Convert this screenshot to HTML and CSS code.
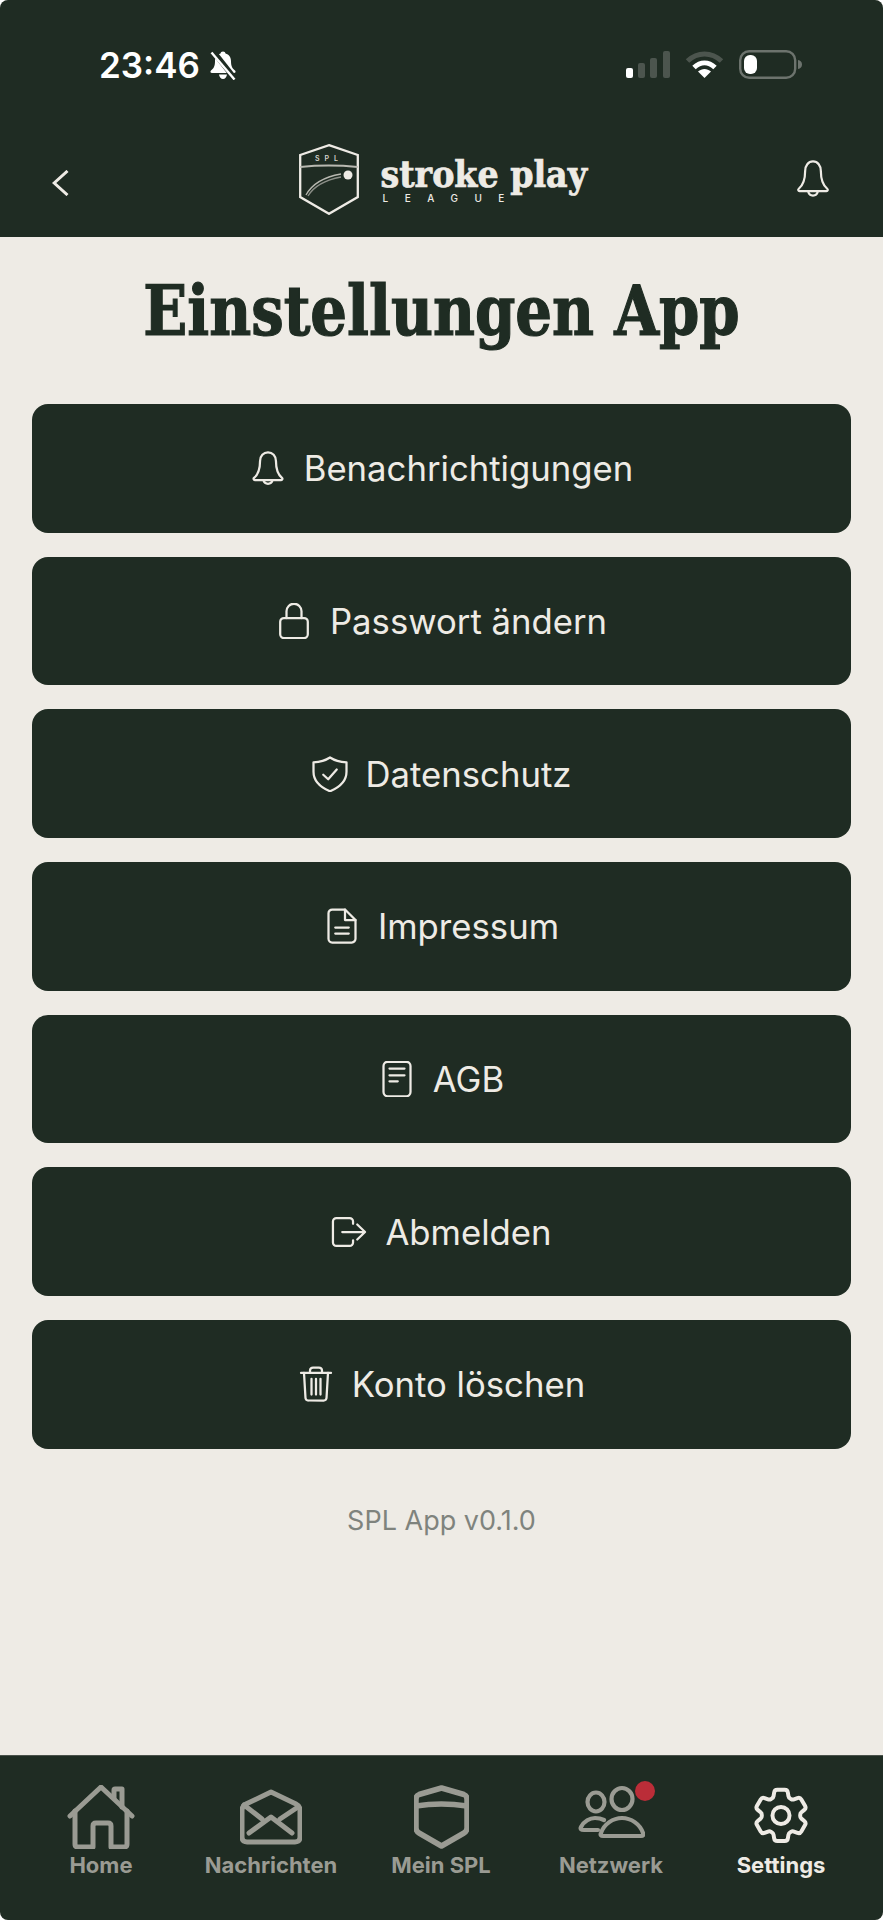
FILE: index.html
```html
<!DOCTYPE html>
<html>
	<head>
		<meta charset="UTF-8">
		<title>Einstellungen App</title>
		<link rel="stylesheet" href="styles.css">
	</head>
	<body>
		<div class="app">
			<header class="top">
				<div class="status">
					<div class="status-left">
						<span class="time">23:46</span>
						<svg class="silent" viewBox="0 0 28 29" width="28" height="29">
							<path fill="#fff" d="M14 .5c-1.500 0-2.300.9-2.500 2.100C8 3.500 6 6.300 6 10.200c0 5.300-1.700 7.300-4 9.300-1.100 1-.5 2.500 1 2.500h22c1.500 0 2.100-1.500 1-2.500-2.300-2-4-4-4-9.300 0-3.900-2-6.700-5.500-7.600C16.300 1.400 15.500.5 14 .5z"/>
							<path fill="#fff" d="M10 23.500h8c-.3 2.500-2 4.500-4 4.500s-3.700-2-4-4.500z"/>
							<path stroke="#1f2c23" stroke-width="5.500" d="M4 0l22 28"/>
							<path stroke="#fff" stroke-width="2.400" d="M2.500 1.500l23 27"/>
						</svg>
					</div>
					<div class="status-right">
						<svg viewBox="0 0 44 27" width="44" height="27">
							<rect x="0" y="17" width="7" height="10" rx="2" fill="#fff"/>
							<rect x="12" y="12" width="7" height="15" rx="2" fill="#4c554e"/>
							<rect x="24" y="7" width="7" height="20" rx="2" fill="#4c554e"/>
							<rect x="37" y="0" width="7" height="27" rx="2" fill="#4c554e"/>
						</svg>
						<svg viewBox="0 0 39 27" width="39" height="27">
							<path fill="none" stroke="#4c554e" stroke-width="5" d="M2.500 10c10-9.500 24-9.500 34 0"/>
							<path fill="none" stroke="#fff" stroke-width="5" d="M9 16.500c6.500-6 14.500-6 21 0"/>
							<path fill="#fff" d="M13 20.500c4-3.500 9-3.500 13 0l-6.500 6.500z"/>
						</svg>
						<svg viewBox="0 0 63 29" width="63" height="29">
							<rect x="1.200" y="1.200" width="55" height="26.600" rx="9" fill="none" stroke="#6c736d" stroke-width="2.400"/>
							<rect x="5" y="5" width="13" height="19" rx="6" fill="#fff"/>
							<path fill="#6c736d" d="M59 10c2.500.5 4 2 4 4.500s-1.500 4-4 4.500z"/>
						</svg>
					</div>
				</div>
				<div class="bar">
					<svg class="back" viewBox="0 0 17 26" width="17" height="26">
						<path fill="none" stroke="#eeebe5" stroke-width="3" d="M15.500 1L2.200 13l13.300 12"/>
					</svg>
					<div class="logo">
						<svg class="logo-mark" viewBox="0 0 60 71" width="60" height="71">
							<path fill="none" stroke="#eeebe5" stroke-width="2.300" d="M30 1.200L58.800 11v42L30 69.800 1.200 53V11z"/>
							<path fill="none" stroke="#b9b9b1" stroke-width="1.800" d="M1.200 23c19-2 38-2 57.600 0"/>
							<text class="logo-spl" x="30" y="17" text-anchor="middle">SPL</text>
							<circle cx="49" cy="31" r="4.500" fill="#eeebe5"/>
							<path fill="none" stroke="#b9b9b1" stroke-width="1.300" d="M7 51c6-11 18-18 35-21"/>
							<path fill="none" stroke="#8c8f88" stroke-width="1.300" d="M9 52c6-10 17-16 33-19"/>
						</svg>
						<div class="logo-text">
							<div class="logo-name">stroke play</div>
							<div class="logo-league">LEAGUE</div>
						</div>
					</div>
					<svg class="bell-top" viewBox="0 0 24 27" width="36" height="40">
						<path fill="none" stroke="#eeebe5" stroke-width="1.500" stroke-linejoin="round" d="M12 1c-3.200 0-5.300 2.800-5.300 6.400 0 6-1.300 9.500-4.300 12-.7.600-.4 1.600.5 1.600h18.200c.9 0 1.200-1 .5-1.600-3-2.500-4.300-6-4.300-12C17.300 3.800 15.200 1 12 1z"/>
						<path fill="none" stroke="#eeebe5" stroke-width="1.500" d="M8.800 21.500a3.300 3.300 0 0 0 6.400 0"/>
					</svg>
				</div>
			</header>

			<main class="content">
				<h1 class="title">Einstellungen App</h1>
				<div class="menu">
					<a class="btn">
						<svg class="ico" viewBox="0 0 24 24"><path d="M12 1.500c-3 0-5.300 2.500-5.300 5.800 0 5.600-1.300 9-4 11.300-.6.500-.3 1.400.5 1.400h17.600c.8 0 1.100-.9.500-1.400-2.700-2.300-4-5.700-4-11.300 0-3.300-2.300-5.800-5.300-5.800z"/><path d="M9 20.200a3.100 3.100 0 0 0 6 0"/></svg>
						<span>Benachrichtigungen</span>
					</a>
					<a class="btn">
						<svg class="ico" viewBox="0 0 24 24"><rect x="2.800" y="10" width="18.400" height="13.400" rx="2.500"/><path d="M7 10V5.500a5 5 0 0 1 10 0V10"/></svg>
						<span>Passwort ändern</span>
					</a>
					<a class="btn">
						<svg class="ico" viewBox="0 0 24 24"><path d="M12 1c3 2 6.500 3 11 3.200v6.300c0 6-5 10.500-11 13-6-2.500-11-7-11-13V4.200C5.500 4 9 3 12 1z"/><path d="M7.500 12.500l3.300 3 5.700-6.500"/></svg>
						<span>Datenschutz</span>
					</a>
					<a class="btn">
						<svg class="ico" viewBox="0 0 24 24"><path d="M14 1H5.500A2.500 2.500 0 0 0 3 3.500v17A2.500 2.500 0 0 0 5.500 23h13a2.500 2.500 0 0 0 2.500-2.500V8z"/><path d="M14 1v7h7"/><path d="M7.500 13h9M7.500 17h9"/></svg>
						<span>Impressum</span>
					</a>
					<a class="btn">
						<svg class="ico" viewBox="0 0 24 24"><rect x="3" y="0.500" width="18" height="23" rx="2.800"/><path d="M7 5h10M7 9.500h10M7 13.500h5.500"/></svg>
						<span>AGB</span>
					</a>
					<a class="btn">
						<svg class="ico" viewBox="0 0 24 24"><path d="M14.700 6.500V5a2.300 2.300 0 0 0-2.300-2.300H3.600A2.300 2.300 0 0 0 1.300 5v14a2.300 2.300 0 0 0 2.300 2.300h8.800a2.300 2.300 0 0 0 2.300-2.300v-1.500"/><path d="M7.500 12h15.200M17.500 7l5.200 5-5.200 5"/></svg>
						<span>Abmelden</span>
					</a>
					<a class="btn">
						<svg class="ico" viewBox="0 0 24 24"><path d="M2 4.600h20"/><path d="M8 4.600V3a2 2 0 0 1 2-2h4a2 2 0 0 1 2 2v1.600"/><path d="M4 4.600l1 16.800a2 2 0 0 0 2 1.600h10a2 2 0 0 0 2-1.600l1-16.800"/><path d="M9 8.500V19M12 8.500V19M15 8.500V19"/></svg>
						<span>Konto löschen</span>
					</a>
				</div>
				<p class="version">SPL App v0.1.0</p>
			</main>

			<nav class="tabs">
				<a class="tab">
					<svg viewBox="0 0 68 64" width="68" height="64"><path d="M3 31L34 2l31 29"/><path d="M8 26v33q0 3 3 3h15V41q0-3 3-3h12q3 0 3 3v21h13q3 0 3-3V26"/><path d="M47 13V5q0-1 1-1h7v18"/></svg>
					<span>Home</span>
				</a>
				<a class="tab">
					<svg viewBox="0 0 62 64" width="62" height="64"><path d="M2 25q0-4 4-6L31 7l25 12q4 2 4 6v27q0 5-5 5H7q-5 0-5-5z"/><path d="M9 48l22-16 21 16M4 20l18 14M58 22L40 34"/></svg>
					<span>Nachrichten</span>
				</a>
				<a class="tab">
					<svg class="thick" viewBox="0 0 55 64" width="55" height="64"><path d="M27.500 3L50 9.500q3 1 3 5v28.500q0 3-3 5L27.500 61 5 48q-3-2-3-5V14.500q0-4 3-5z"/><path d="M2 21q25-4 51 0"/></svg>
					<span>Mein SPL</span>
				</a>
				<a class="tab">
					<span class="tab-ico">
						<svg class="thin" viewBox="0 0 67 64" width="67" height="64"><ellipse cx="44" cy="14" rx="10.500" ry="11"/><ellipse cx="18" cy="17" rx="8.500" ry="9.500"/><path d="M25 51c-2 0-3-1-2-3 3-9 12-15 21-15s18 6 21 15c1 2 0 3-2 3z"/><path d="M20 45H6c-3 0-4-1-3-3 3-6 9-9 14-9 4 0 7 1 9 2"/></svg>
						<i class="dot"></i>
					</span>
					<span>Netzwerk</span>
				</a>
				<a class="tab on">
					<svg viewBox="0.750 1.300 22.500 22.500" width="64" height="64"><path stroke-width="1.400" d="M9.594 3.940c.09-.542.56-.94 1.110-.94h2.593c.55 0 1.020.398 1.110.94l.213 1.281c.063.374.313.686.645.870.074.04.147.083.22.127.325.196.72.257 1.075.124l1.217-.456a1.125 1.125 0 0 1 1.370.49l1.296 2.247a1.125 1.125 0 0 1-.26 1.431l-1.003.827c-.293.241-.438.613-.43.992a7.723 7.723 0 0 1 0 .255c-.008.378.137.75.43.991l1.004.827c.424.35.534.955.26 1.430l-1.298 2.247a1.125 1.125 0 0 1-1.369.491l-1.217-.456c-.355-.133-.75-.072-1.076.124a6.470 6.470 0 0 1-.22.128c-.331.183-.581.495-.644.869l-.213 1.281c-.09.543-.56.94-1.110.94h-2.594c-.55 0-1.019-.398-1.110-.94l-.213-1.281c-.062-.374-.312-.686-.644-.87a6.520 6.520 0 0 1-.22-.127c-.325-.196-.72-.257-1.076-.124l-1.217.456a1.125 1.125 0 0 1-1.369-.49l-1.297-2.247a1.125 1.125 0 0 1 .26-1.431l1.004-.827c.292-.24.437-.613.43-.991a6.932 6.932 0 0 1 0-.255c.007-.38-.138-.751-.43-.992l-1.004-.827a1.125 1.125 0 0 1-.26-1.430l1.297-2.247a1.125 1.125 0 0 1 1.370-.491l1.216.456c.356.133.751.072 1.076-.124.072-.044.146-.086.22-.128.332-.183.582-.495.644-.869l.214-1.280z"/><circle stroke-width="1.400" cx="12" cy="12" r="3"/></svg>
					<span>Settings</span>
				</a>
			</nav>
		</div>
	</body>
</html>
```

FILE: styles.css
```css
* {margin: 0; padding: 0; box-sizing: border-box;}
html, body {background: #fff;}
svg {display: block;}

.app {
	width: 883px;
	height: 1920px;
	display: flex;
	flex-direction: column;
	background: #eeebe5;
	border-radius: 8px;
	overflow: hidden;
	font-family: Inter, "Liberation Sans", sans-serif;
}

/* top */
.top {
	height: 237px;
	background: #1f2c23;
	flex: none;
}
.status {
	height: 130px;
	padding: 50px 81px 0 99px;
	display: flex;
	justify-content: space-between;
	align-items: flex-start;
}
.status-left {
	display: flex;
	align-items: center;
	gap: 9px;
}
.time {
	font-size: 35px;
	line-height: 30px;
	font-weight: 600;
	color: #fff;
}
.status-right {
	display: flex;
	align-items: center;
	gap: 15px;
}
.bar {
	display: grid;
	grid-template-columns: 1fr auto 1fr;
	align-items: center;
	padding: 14px 52px 0 52px;
}
.back {margin-top: 6px;}
.bell-top {justify-self: end;}
.logo {
	display: flex;
	align-items: center;
	gap: 22px;
	margin-left: 3px;
}
.logo-spl {
	font-family: Inter, sans-serif;
	font-size: 7px;
	font-weight: 600;
	letter-spacing: 5px;
	fill: #d5d3cc;
}
.logo-text {
	color: #eeebe5;
	width: 207px;
}
.logo-name {
	font-family: "DejaVu Serif Condensed", "DejaVu Serif", serif;
	font-weight: 700;
	font-size: 37px;
	line-height: 36px;
	white-space: nowrap;
	-webkit-text-stroke: .7px #eeebe5;
}
.logo-league {
	font-size: 10px;
	line-height: 10px;
	font-weight: 500;
	letter-spacing: 16.500px;
	padding-left: 2px;
	margin-top: 1px;
}

/* content */
.content {
	flex: 1;
	padding: 0 32px;
}
/* the slab is still too wide when condensed, squeeze it */
.title {
	font-family: "DejaVu Serif Condensed", "DejaVu Serif", serif;
	font-weight: 700;
	font-size: 70px;
	line-height: 96px;
	padding-top: 26px;
	height: 167px;
	text-align: center;
	white-space: nowrap;
	color: #1f2c23;
	transform: scaleX(.917);
	-webkit-text-stroke: 1.200px #1f2c23;
}
.menu {
	display: flex;
	flex-direction: column;
	gap: 24.200px;
}
.btn {
	height: 128.500px;
	display: flex;
	align-items: center;
	justify-content: center;
	gap: 18px;
	background: #1f2c23;
	border-radius: 16px;
	color: #eeebe5;
	font-size: 34.700px;
}
.ico {
	width: 36px;
	height: 36px;
	fill: none;
	stroke: #eeebe5;
	stroke-width: 1.500;
	stroke-linecap: round;
	stroke-linejoin: round;
}
.version {
	margin-top: 54px;
	text-align: center;
	font-size: 27px;
	line-height: 36px;
	color: #7f837d;
}

/* tabs */
.tabs {
	flex: none;
	height: 165px;
	background: #1f2c23;
	border-top: 1px solid #4a524b;
	padding: 29px 16px 0;
	display: grid;
	grid-template-columns: repeat(5, 170px);
	align-items: start;
}
.tab {
	display: flex;
	flex-direction: column;
	align-items: center;
	gap: 3px;
	font-size: 22px;
	line-height: 26px;
	font-weight: 700;
	color: #9a9b93;
}
.tab svg {
	fill: none;
	stroke: #9a9b93;
	stroke-width: 5;
	stroke-linecap: round;
	stroke-linejoin: round;
}
.tab svg.thick {stroke-width: 5.500;}
.tab svg.thin {stroke-width: 4.200;}
.tab.on {color: #eeebe5;}
.tab.on svg {stroke: #eeebe5;}
.tab-ico {position: relative;}
.dot {
	position: absolute;
	right: -10px;
	top: -4px;
	width: 20px;
	height: 20px;
	border-radius: 50%;
	background: #bb2d38;
}
```
